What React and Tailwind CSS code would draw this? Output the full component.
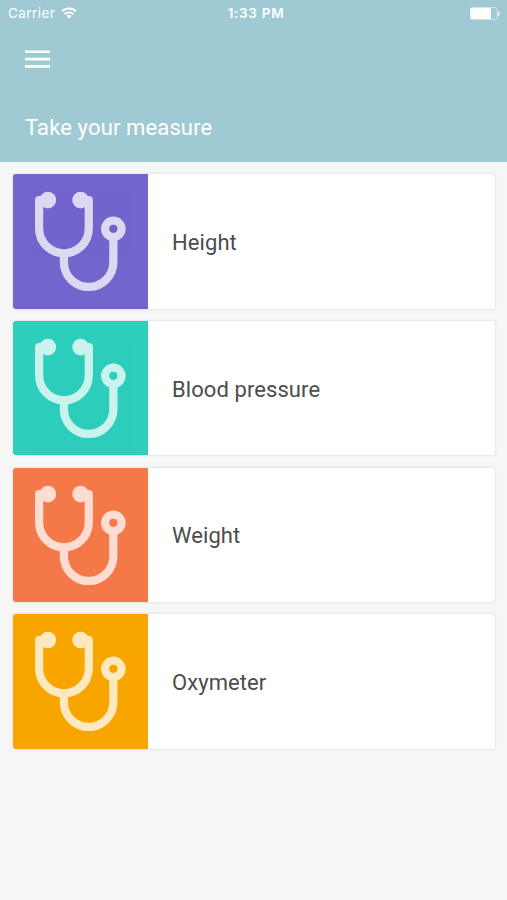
const measures = [
  { id: "height", label: "Height", color: "bg-[#7265cc]" },
  { id: "blood-pressure", label: "Blood pressure", color: "bg-[#2dcebb]" },
  { id: "weight", label: "Weight", color: "bg-[#f5784a]" },
  { id: "oxymeter", label: "Oxymeter", color: "bg-[#f8a500]" },
];

function StethoscopeIcon() {
  return (
    <svg viewBox="0 0 134 134" className="h-full w-full" fill="none">
      <g opacity="0.75" stroke="#fff" strokeWidth="8.2">
        <path d="M34.7 26H26V54.3a24.75 24.75 0 0 0 49.5 0V26H67.3" strokeLinejoin="round" />
        <path d="M50.7 79V88a24.65 24.65 0 0 0 49.3 0V64" />
        <circle cx="100" cy="54.7" r="8.2" />
        <circle cx="34.7" cy="26" r="8.3" fill="#fff" stroke="none" />
        <circle cx="67.3" cy="26" r="8.3" fill="#fff" stroke="none" />
      </g>
    </svg>
  );
}

function StatusBar() {
  return (
    <div className="grid h-[27px] grid-cols-3 items-center pl-2 pr-[7px] font-['Inter','Liberation_Sans',sans-serif] text-[13.5px] leading-none">
      <div className="flex items-center gap-[6px]">
        <span className="tracking-[0.45px]">Carrier</span>
        <svg viewBox="0 0 16 12" className="mb-[2px] h-3 w-4" fill="none" stroke="#fff" strokeWidth="1.9">
          <path d="M1 4.4a10 10 0 0 1 14 0" />
          <path d="M3.6 7.2a6.2 6.2 0 0 1 8.8 0" />
          <path d="M8 11.7L5.4 9.1a3.7 3.7 0 0 1 5.2 0z" fill="#fff" stroke="none" />
        </svg>
      </div>
      <span className="pl-1 text-center font-semibold tracking-[0.7px]">1:33 PM</span>
      <svg viewBox="0 0 30 14" className="h-[14px] w-[30px] justify-self-end" fill="none">
        <rect x="0.5" y="0.5" width="26.5" height="12" rx="2" stroke="#fff" strokeOpacity="0.5" />
        <rect x="0.5" y="1" width="20.5" height="11" rx="1.5" fill="#fff" />
        <path d="M28 4.5a2.4 2.4 0 0 1 0 4.5z" fill="#fff" />
      </svg>
    </div>
  );
}

function Header() {
  return (
    <header className="h-[162px] bg-[#9fcad4] text-white">
      <StatusBar />
      <button className="ml-[25px] mt-[23px] block h-[18px] w-[25px]" aria-label="Menu">
        <svg viewBox="0 0 25 18" className="h-full w-full" stroke="#fff" strokeWidth="2.6">
          <path d="M0 1.8h25M0 9.1h25M0 16.4h25" />
        </svg>
      </button>
      <h1 className="ml-[25px] mt-[47px] text-[22px] leading-[26px] tracking-[0.13px]">Take your measure</h1>
    </header>
  );
}

function MeasureCard({ label, color }) {
  return (
    <div className="flex h-[134.4px] items-center overflow-hidden rounded-[3px] bg-white shadow-[0_0_2px_1px_rgba(0,0,0,0.07)]">
      <div className={`h-full w-[134.5px] shrink-0 ${color}`}>
        <StethoscopeIcon />
      </div>
      <span className="ml-[24.5px] pt-[3px] text-[22px] leading-[26px] tracking-[0.08px] text-[#4c4c4c]">{label}</span>
    </div>
  );
}

function App() {
  return (
    <div className="min-h-screen bg-[#f6f6f6] font-[Roboto,'Liberation_Sans',sans-serif]">
      <Header />
      <main className="flex flex-col gap-[12.2px] px-3 pl-[13px] pt-[12.4px]">
        {measures.map((item) => (
          <MeasureCard key={item.id} label={item.label} color={item.color} />
        ))}
      </main>
    </div>
  );
}

export default App;
